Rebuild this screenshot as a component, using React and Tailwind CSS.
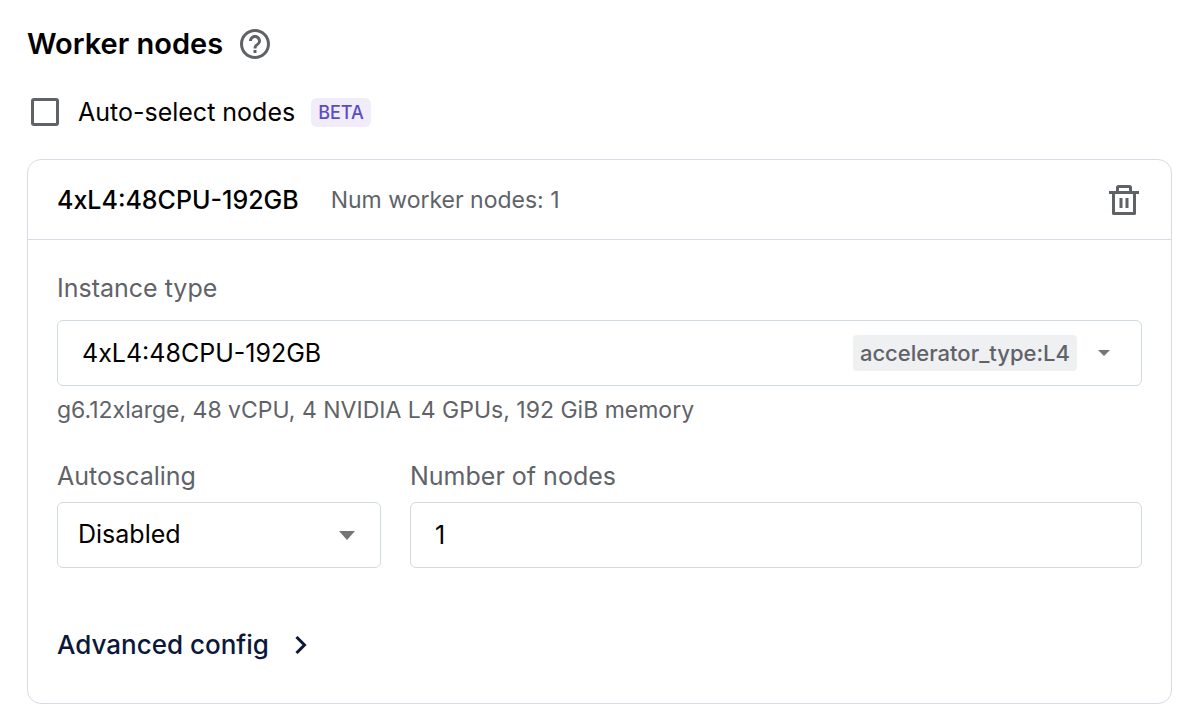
import React, { useState } from "react";

function HelpIcon() {
  return (
    <svg viewBox="0 0 24 24" className="size-9" fill="currentColor" aria-hidden="true">
      <path d="M11 18h2v-2h-2v2zm1-16C6.48 2 2 6.48 2 12s4.48 10 10 10 10-4.48 10-10S17.52 2 12 2zm0 18c-4.41 0-8-3.59-8-8s3.59-8 8-8 8 3.59 8 8-3.59 8-8 8zm0-14c-2.21 0-4 1.79-4 4h2c0-1.1.9-2 2-2s2 .9 2 2c0 2-3 1.75-3 5h2c0-2.25 3-2.5 3-5 0-2.21-1.79-4-4-4z" />
    </svg>
  );
}

function TrashIcon() {
  return (
    <svg viewBox="0 0 30 30" className="size-[30px]" fill="none" stroke="currentColor" aria-hidden="true">
      <path d="M0 7.5H30" strokeWidth="3" />
      <path d="M8.5 7V2.5Q8.5 1.5 9.5 1.5H20.5Q21.5 1.5 21.5 2.5V7" strokeWidth="3" />
      <path d="M4.5 7.5V28.5H25.5V7.5" strokeWidth="3" strokeLinejoin="round" />
      <path d="M12 13V23M18 13V23" strokeWidth="3" />
    </svg>
  );
}

const label = "text-[25px] leading-8 text-[#5f6368]";
const field =
  "h-[66px] w-full rounded-md border border-[#d1d9e1] bg-white text-[25px] text-black outline-none focus:border-[#5b4cc4]";

export default function App() {
  const [auto, setAuto] = useState(false);
  const [instance, setInstance] = useState("4xL4:48CPU-192GB");
  const [count, setCount] = useState("1");

  return (
    <main className="bg-white pt-6 pr-7 pb-[18px] pl-[27px] font-['Inter',sans-serif] text-black">
      <div className="flex h-10 items-center gap-3.5">
        <h1 className="text-[29px] leading-10 font-semibold">Worker nodes</h1>
        <button type="button" aria-label="About worker nodes" className="text-[#5f6368]">
          <HelpIcon />
        </button>
      </div>

      <div className="mt-7 flex h-10 items-center pl-1">
        <input
          id="auto-select"
          type="checkbox"
          checked={auto}
          onChange={(e) => setAuto(e.target.checked)}
          className="size-7 appearance-none rounded-[3px] border-3 border-[#5f6368] checked:bg-[#5f6368]"
        />
        <label htmlFor="auto-select" className="pl-[19px] text-[25px] leading-8">
          Auto-select nodes
        </label>
        <span className="ml-4 rounded-md bg-[#f1ecf9] px-[7px] text-[18px] leading-[29px] font-medium text-[#5b4cc4]">
          BETA
        </span>
      </div>

      <section className="mt-[27px] rounded-[14px] border border-[#d5dce4]">
        <header className="flex h-20 items-center border-b border-[#d5dce4] px-[29px]">
          <h2 className="text-[25px] leading-8 font-medium">4xL4:48CPU-192GB</h2>
          <p className="ml-8 text-[23px] leading-8 text-[#5f6368]">Num worker nodes: {count}</p>
          <button type="button" aria-label="Delete worker group" className="mr-[3px] ml-auto text-[#5f6368]">
            <TrashIcon />
          </button>
        </header>

        <div className="px-[29px] pt-8 pb-[42px]">
          <label htmlFor="instance-type" className={`block ${label}`}>
            Instance type
          </label>
          <div className="mt-4 flex h-[66px] items-center rounded-md border border-[#d1d9e1] pr-[26px] pl-6 focus-within:border-[#5b4cc4]">
            <input
              id="instance-type"
              type="text"
              value={instance}
              onChange={(e) => setInstance(e.target.value)}
              className="min-w-0 flex-1 bg-transparent text-[25px] leading-8 outline-none"
            />
            <span className="rounded-[4px] bg-[#eff0f2] px-[7px] text-[22px] leading-9 font-medium text-[#5f6368]">
              accelerator_type:L4
            </span>
            <button type="button" aria-label="Show instance types" className="ml-4 flex h-9 w-[22px] items-center justify-center text-[#757575]">
              <svg viewBox="0 0 12 6" className="h-1.5 w-3" fill="currentColor" aria-hidden="true">
                <path d="M0 0H12L6 6Z" />
              </svg>
            </button>
          </div>
          <p className="mt-2 text-[23px] leading-8 text-[#5f6368]">
            g6.12xlarge, 48 vCPU, 4 NVIDIA L4 GPUs, 192 GiB memory
          </p>

          <div className="mt-[34px] flex gap-[29px]">
            <div className="w-[324px] shrink-0">
              <label htmlFor="autoscaling" className={`block ${label}`}>
                Autoscaling
              </label>
              <div className="relative mt-2.5">
                <select id="autoscaling" defaultValue="Disabled" className={`block appearance-none pr-14 pl-5 ${field}`}>
                  <option>Disabled</option>
                  <option>Enabled</option>
                </select>
                <svg
                  viewBox="0 0 16 9"
                  className="pointer-events-none absolute inset-y-0 right-[26px] my-auto h-[9px] w-4 text-[#757575]"
                  fill="currentColor"
                  aria-hidden="true"
                >
                  <path d="M0 0H16L8 9Z" />
                </svg>
              </div>
            </div>
            <div className="min-w-0 flex-1">
              <label htmlFor="node-count" className={`block ${label}`}>
                Number of nodes
              </label>
              <input
                id="node-count"
                type="text"
                inputMode="numeric"
                value={count}
                onChange={(e) => setCount(e.target.value)}
                className={`mt-2.5 block px-6 ${field}`}
              />
            </div>
          </div>

          <button type="button" className="mt-[61px] flex h-8 items-center gap-[26px] text-[26px] leading-8 font-medium text-[#0b1839]">
            Advanced config
            <svg viewBox="0 0 12 18" className="h-[18px] w-3" fill="none" stroke="currentColor" strokeWidth="3" aria-hidden="true">
              <path d="M1.5 1L9.5 9L1.5 17" />
            </svg>
          </button>
        </div>
      </section>
    </main>
  );
}
